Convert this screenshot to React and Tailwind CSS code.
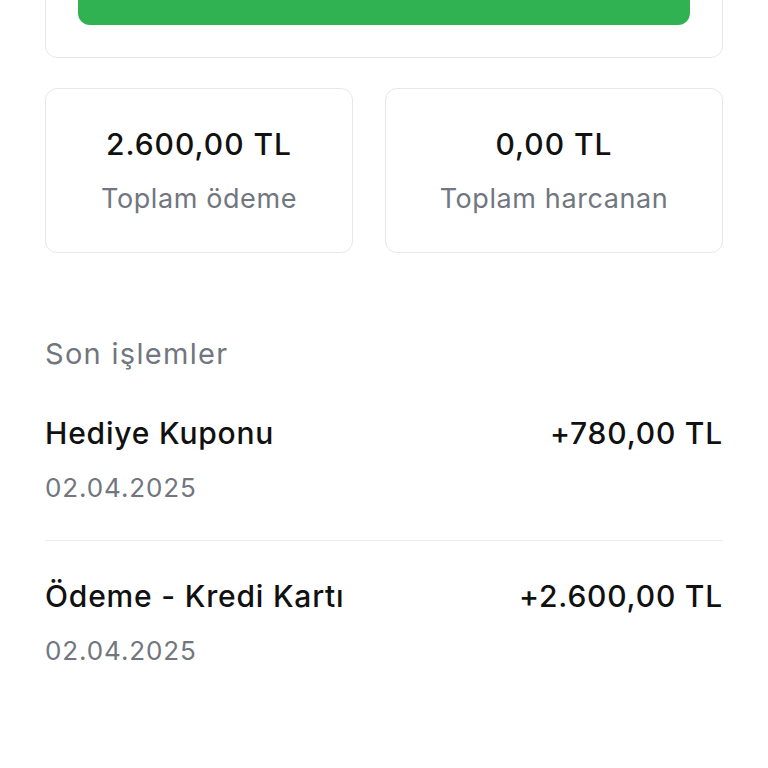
export default function App() {
  const transactions = [
    { title: "Hediye Kuponu", date: "02.04.2025", amount: "+780,00 TL" },
    { title: "Ödeme - Kredi Kartı", date: "02.04.2025", amount: "+2.600,00 TL" },
  ];

  return (
    <div
      className="h-[768px] w-[768px] overflow-hidden bg-white px-[45px] text-[#111]"
      style={{ fontFamily: "Inter, 'Noto Sans', sans-serif" }}
    >
      {/* top card with action button, cut off by the viewport */}
      <div className="-mt-[64px] rounded-xl border border-[#e6e7ea] px-8 pt-8 pb-8">
        <div className="h-[56px] rounded-xl bg-[#30b152]" />
      </div>

      {/* totals */}
      <div className="mt-[30px] grid grid-cols-[308px_1fr] gap-8">
        <div className="flex h-[165px] flex-col items-center justify-center rounded-xl border border-[#e6e7ea]">
          <div className="text-[30px] font-medium leading-none tracking-[1px]">2.600,00 TL</div>
          <div className="mt-[26px] text-[27px] leading-none tracking-[0.6px] text-[#71767f]">Toplam ödeme</div>
        </div>
        <div className="flex h-[165px] flex-col items-center justify-center rounded-xl border border-[#e6e7ea]">
          <div className="text-[30px] font-medium leading-none tracking-[1px]">0,00 TL</div>
          <div className="mt-[26px] text-[27px] leading-none tracking-[0.6px] text-[#71767f]">Toplam harcanan</div>
        </div>
      </div>

      {/* recent transactions */}
      <div className="mt-[86px] text-[29px] leading-none tracking-[1.3px] text-[#71767f]">Son işlemler</div>
      <div className="mt-[50px]">
        {transactions.map((t, i) => (
          <div
            key={i}
            className={`flex items-start justify-between ${i > 0 ? "border-t border-[#ececee] pt-[40px]" : "pb-[39px]"}`}
          >
            <div>
              <div className="text-[30px] font-medium leading-none tracking-[0.8px]">{t.title}</div>
              <div className="mt-[27px] text-[26px] leading-none tracking-[0.9px] text-[#71767f]">{t.date}</div>
            </div>
            <div className="text-[30px] font-medium leading-none tracking-[0.8px]">{t.amount}</div>
          </div>
        ))}
      </div>
    </div>
  );
}
